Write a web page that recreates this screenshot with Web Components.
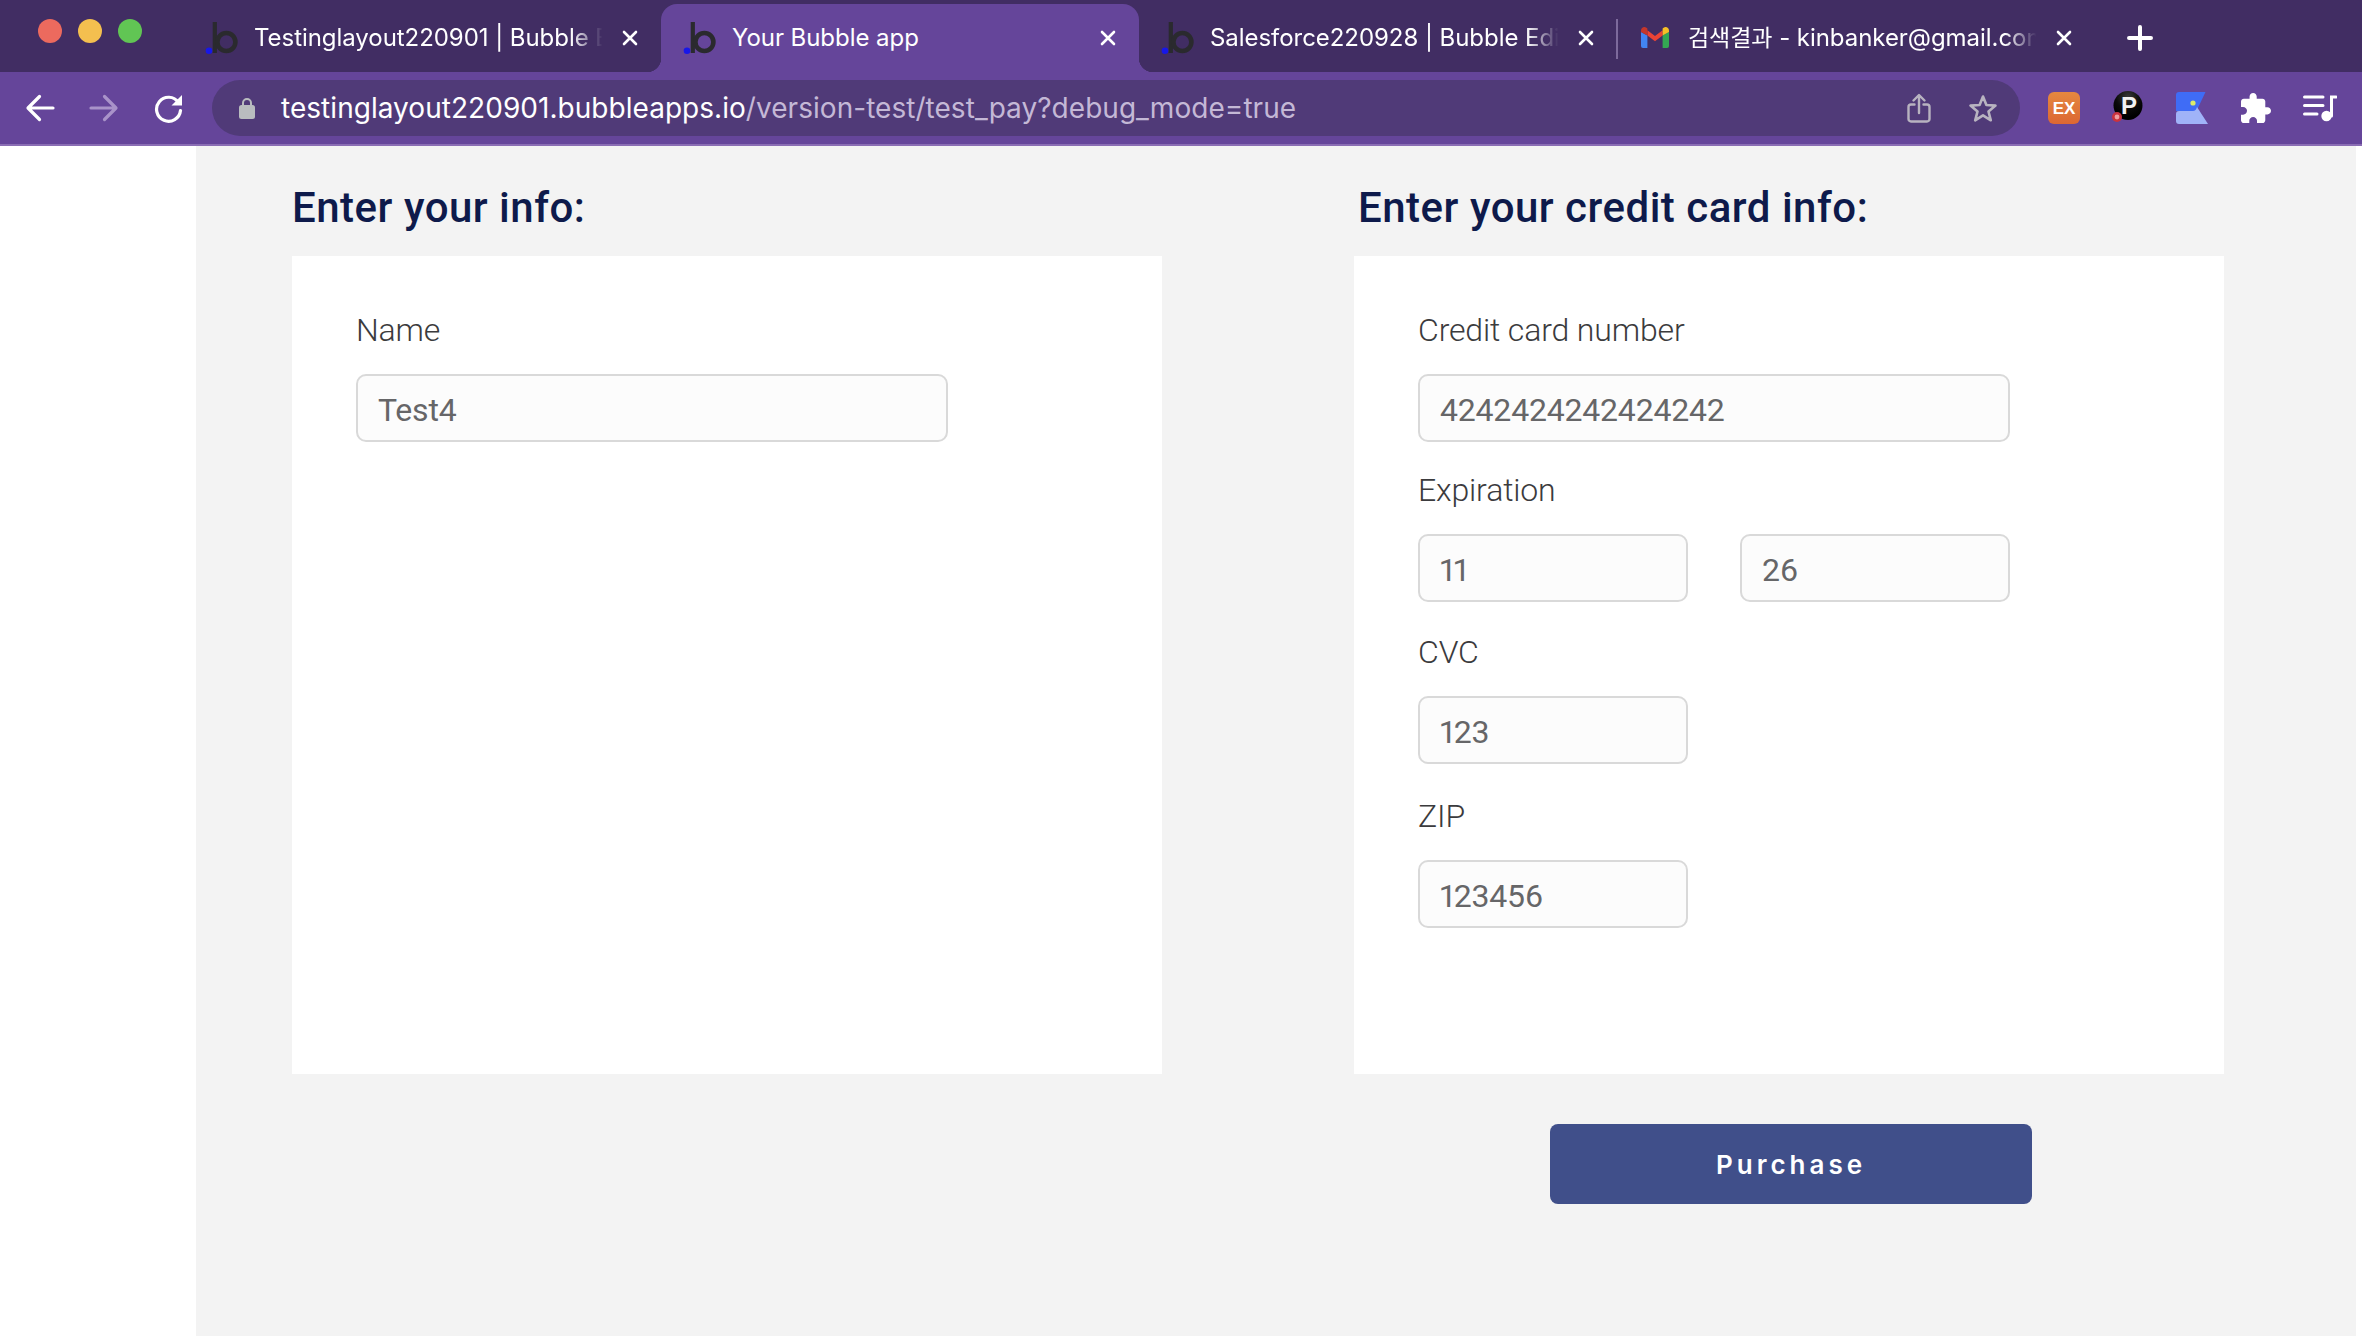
<!DOCTYPE html>
<html>
<head>
<meta charset="utf-8">
<title>Your Bubble app</title>
<style>
html, body { margin: 0; padding: 0; height: 100%; background: #fff; overflow: hidden; }
</style>
</head>
<body>
<browser-chrome>
    <browser-tab icon="bubble" fade>Testinglayout220901 | Bubble Editor</browser-tab>
    <browser-tab icon="bubble" active>Your Bubble app</browser-tab>
    <browser-tab icon="bubble" fade>Salesforce220928 | Bubble Editor</browser-tab>
    <browser-tab icon="gmail" fade divider><span style="font-size:23px">검색결과</span> - kinbanker@gmail.com</browser-tab>
</browser-chrome>
<pay-page>
    <pay-section heading="Enter your info:">
        <pay-field label="Name"><text-box>Test4</text-box></pay-field>
    </pay-section>
    <pay-section heading="Enter your credit card info:" nudge>
        <pay-field label="Credit card number"><text-box>4242424242424242</text-box></pay-field>
        <pay-field label="Expiration" style="margin-top:24px">
            <text-box short>11</text-box>
            <text-box short>26</text-box>
        </pay-field>
        <pay-field label="CVC" style="margin-top:26px"><text-box short>123</text-box></pay-field>
        <pay-field label="ZIP" style="margin-top:28px"><text-box short>123456</text-box></pay-field>
    </pay-section>
    <purchase-button slot="action">Purchase</purchase-button>
</pay-page>

<script>
const bubbleIcon = `
    <svg width="36" height="36" viewBox="0 0 36 36">
        <rect x="8.7" y="2" width="4.2" height="31" fill="#2a2a2e"/>
        <circle cx="22.4" cy="22" r="9" fill="none" stroke="#2a2a2e" stroke-width="4.6"/>
        <circle cx="5" cy="30.8" r="3.3" fill="#1717e8"/>
    </svg>`;

const gmailIcon = `
    <svg width="36" height="36" viewBox="0 0 36 36">
        <g transform="translate(3 7)">
            <path d="M0 5 V19 a2 2 0 0 0 2 2 H6.4 V8.5 Z" fill="#4285f4"/>
            <path d="M28 5 V19 a2 2 0 0 1 -2 2 H21.6 V8.5 Z" fill="#34a853"/>
            <path d="M6.4 8.5 V3.2 L14 9 L21.6 3.2 V8.5 L14 14.2 Z" fill="#ea4335"/>
            <path d="M0 5 V3.5 C0 .6 3.2 -1 5.4 .7 L6.4 1.5 V8.5 Z" fill="#c5362b"/>
            <path d="M28 5 V3.5 C28 .6 24.8 -1 22.6 .7 L21.6 1.5 V8.5 Z" fill="#f6bf26"/>
        </g>
    </svg>`;

class BrowserTab extends HTMLElement {
    constructor() {
        super();
        this.shadowDOM = this.attachShadow({ mode: "open" });
    }

    connectedCallback() {
        const icon = this.getAttribute("icon") === "gmail" ? gmailIcon : bubbleIcon;
        this.shadowDOM.innerHTML = `
            <style>
                :host {
                    display: flex;
                    align-items: center;
                    position: relative;
                    box-sizing: border-box;
                    flex: 0 0 478px;
                    height: 68px;
                    padding-left: 21px;
                    color: #fff;
                    font: 24px/1 Inter, "Noto Sans CJK KR", sans-serif;
                    letter-spacing: -0.05px;
                }
                :host([active]) {
                    background: #65459a;
                    border-radius: 16px 16px 0 0;
                }
                :host([active])::before, :host([active])::after {
                    content: "";
                    position: absolute;
                    bottom: 0;
                    width: 14px;
                    height: 14px;
                }
                :host([active])::before {
                    left: -14px;
                    background: radial-gradient(circle at 0 0, transparent 14px, #65459a 14.5px);
                }
                :host([active])::after {
                    right: -14px;
                    background: radial-gradient(circle at 100% 0, transparent 14px, #65459a 14.5px);
                }
                :host([divider])::before {
                    content: "";
                    position: absolute;
                    left: -1px;
                    top: 15px;
                    width: 2px;
                    height: 40px;
                    background: #7d6a9c;
                }
                svg { flex: none; display: block; }
                .title {
                    flex: none;
                    width: 352px;
                    margin-left: 14px;
                    white-space: nowrap;
                    overflow: hidden;
                    line-height: 30px;
                }
                :host([fade]) .title {
                    -webkit-mask-image: linear-gradient(to right, #000 90%, transparent 99%);
                    mask-image: linear-gradient(to right, #000 90%, transparent 99%);
                }
                .close { flex: none; margin-left: 16px; }
            </style>
            ${icon}
            <div class="title"><slot></slot></div>
            <svg class="close" width="16" height="16" viewBox="0 0 16 16">
                <path d="M2 2 L14 14 M14 2 L2 14" stroke="#fff" stroke-width="2.6" stroke-linecap="round"/>
            </svg>`;
    }
}
customElements.define("browser-tab", BrowserTab);

class BrowserChrome extends HTMLElement {
    constructor() {
        super();
        this.shadowDOM = this.attachShadow({ mode: "open" });
    }

    connectedCallback() {
        this.shadowDOM.innerHTML = `
            <style>
                :host { display: block; }
                .tabbar {
                    display: flex;
                    align-items: flex-end;
                    height: 72px;
                    background: #412d63;
                }
                .lights {
                    flex: 0 0 183px;
                    display: flex;
                    gap: 16px;
                    box-sizing: border-box;
                    padding-left: 38px;
                    align-self: flex-start;
                    margin-top: 19px;
                }
                .lights i { width: 24px; height: 24px; border-radius: 50%; }
                .plus { margin: 4px 0 0 32px; align-self: center; display: block; }
                .toolbar {
                    display: flex;
                    align-items: center;
                    height: 74px;
                    box-sizing: border-box;
                    background: #65459a;
                    border-bottom: 2px solid #8a6db4;
                    padding: 0 0 0 25px;
                }
                .nav { display: block; flex: none; }
                .pill {
                    display: flex;
                    align-items: center;
                    box-sizing: border-box;
                    width: 1808px;
                    height: 56px;
                    margin-left: 26px;
                    padding: 0 21px 0 27px;
                    border-radius: 28px;
                    background: #503a78;
                }
                .url {
                    flex: 1;
                    margin-left: 26px;
                    color: #c4b8d6;
                    font: 28px/34px Inter, sans-serif;
                    letter-spacing: 0.04px;
                    white-space: nowrap;
                }
                .url b { font-weight: 400; color: #fff; }
                .exts { display: flex; align-items: center; margin-left: 28px; }
                .exts svg { display: block; flex: none; }
            </style>
            <div class="tabbar">
                <div class="lights">
                    <i style="background:#ec6a5e"></i>
                    <i style="background:#f4bf4f"></i>
                    <i style="background:#61c554"></i>
                </div>
                <slot></slot>
                <svg class="plus" width="26" height="26" viewBox="0 0 26 26">
                    <path d="M13 2 V24 M2 13 H24" stroke="#fff" stroke-width="4" stroke-linecap="round"/>
                </svg>
            </div>
            <div class="toolbar">
                <svg class="nav" width="30" height="30" viewBox="0 0 30 30">
                    <path d="M28 15 H4 M14.5 3.5 L3 15 L14.5 26.5" fill="none" stroke="#fff" stroke-width="3.2" stroke-linecap="round" stroke-linejoin="round"/>
                </svg>
                <svg class="nav" style="margin-left:34px" width="30" height="30" viewBox="0 0 30 30">
                    <path d="M2 15 H26 M15.5 3.5 L27 15 L15.5 26.5" fill="none" stroke="#a993c9" stroke-width="3.2" stroke-linecap="round" stroke-linejoin="round"/>
                </svg>
                <svg class="nav" style="margin-left:34px" width="32" height="32" viewBox="0 0 32 32">
                    <path d="M25.5 10.5 A12 12 0 1 0 27.5 18.5" fill="none" stroke="#fff" stroke-width="3.2" stroke-linecap="round"/>
                    <path d="M29 3 V13.5 H18.5 Z" fill="#fff"/>
                </svg>
                <div class="pill" style="margin-left:27px">
                    <svg class="nav" width="16" height="22" viewBox="0 0 16 22">
                        <path d="M4 9 V6 a4 4 0 0 1 8 0 V9" fill="none" stroke="#b9bcbf" stroke-width="2"/>
                        <rect x="0" y="8" width="16" height="14" rx="2.5" fill="#b9bcbf"/>
                    </svg>
                    <div class="url"><b>testinglayout220901.bubbleapps.io</b>/version-test/test_pay?debug_mode=true</div>
                    <svg class="nav" width="24" height="30" viewBox="0 0 24 30">
                        <path d="M7.5 11.5 H4 a2.5 2.5 0 0 0 -2.5 2.5 V26 a2.5 2.5 0 0 0 2.5 2.5 H20 a2.5 2.5 0 0 0 2.5 -2.5 V14 a2.5 2.5 0 0 0 -2.5 -2.5 H16.5 M12 20 V2.5 M6.5 7.5 L12 2 L17.5 7.5" fill="none" stroke="#b8b3c0" stroke-width="2.4" stroke-linecap="round" stroke-linejoin="round"/>
                    </svg>
                    <svg class="nav" style="margin-left:36px" width="32" height="30" viewBox="0 0 32 30">
                        <path d="M16 3.5 L19.4 12 L28.5 12.6 L21.5 18.5 L23.8 27.3 L16 22.4 L8.2 27.3 L10.5 18.5 L3.5 12.6 L12.6 12 Z" fill="none" stroke="#b8b3c0" stroke-width="2.6" stroke-linejoin="round"/>
                    </svg>
                </div>
                <div class="exts">
                    <svg width="32" height="32" viewBox="0 0 32 32">
                        <defs><linearGradient id="ex" x1="0" y1="0" x2="0" y2="1"><stop offset="0" stop-color="#e5883f"/><stop offset="1" stop-color="#dc6733"/></linearGradient></defs>
                        <rect width="32" height="32" rx="6" fill="url(#ex)"/>
                        <text x="16" y="22" text-anchor="middle" fill="#fff" font-family="Liberation Sans, sans-serif" font-weight="700" font-size="17">EX</text>
                    </svg>
                    <svg style="margin-left:28px" width="36" height="36" viewBox="0 0 36 36">
                        <defs><radialGradient id="ball" cx="0.5" cy="0.2" r="0.7"><stop offset="0" stop-color="#3a3a3a"/><stop offset="0.6" stop-color="#0a0a0a"/><stop offset="1" stop-color="#000"/></radialGradient></defs>
                        <circle cx="20" cy="15.5" r="14.5" fill="url(#ball)"/>
                        <text x="21" y="24" text-anchor="middle" fill="#f2f2f2" font-family="Liberation Sans, sans-serif" font-weight="700" font-size="24">P</text>
                        <circle cx="9" cy="27" r="5" fill="#c9333f"/>
                        <circle cx="9" cy="27" r="2.4" fill="#ef9da0"/>
                    </svg>
                    <svg style="margin-left:32px" width="32" height="32" viewBox="0 0 32 32">
                        <path d="M3 0 H29.5 L20.5 19 H0 V3 a3 3 0 0 1 3 -3 Z" fill="#3f6cf6"/>
                        <path d="M0 22 a3 3 0 0 1 3 -3 H17 q3 0 4 -4 L32 32 H3 a3 3 0 0 1 -3 -3 Z" fill="#a0b3f8"/>
                        <circle cx="17" cy="11" r="2.6" fill="#dcec6a"/>
                    </svg>
                    <svg style="margin-left:33px" width="30" height="30" viewBox="2 1 21 21">
                        <path d="M20.5 11H19V7c0-1.1-.9-2-2-2h-4V3.5C13 2.12 11.88 1 10.5 1S8 2.12 8 3.5V5H4c-1.1 0-1.99.9-1.99 2v3.8H3.5c1.49 0 2.7 1.21 2.7 2.7s-1.21 2.7-2.7 2.7H2V20c0 1.1.9 2 2 2h3.8v-1.5c0-1.49 1.21-2.7 2.7-2.7 1.49 0 2.7 1.21 2.7 2.7V22H17c1.1 0 2-.9 2-2v-4h1.5c1.38 0 2.5-1.12 2.5-2.5S21.88 11 20.5 11z" fill="#fff"/>
                    </svg>
                    <svg style="margin-left:32px" width="34" height="30" viewBox="0 0 34 30">
                        <path d="M1.5 4 H20 M1.5 12.5 H20 M1.5 21 H14" stroke="#fff" stroke-width="3" stroke-linecap="round"/>
                        <path d="M28.5 23 V4 H33" fill="none" stroke="#fff" stroke-width="3" stroke-linecap="round"/>
                        <circle cx="23.5" cy="23" r="5.2" fill="#fff"/>
                    </svg>
                </div>
            </div>`;
    }
}
customElements.define("browser-chrome", BrowserChrome);

class TextBox extends HTMLElement {
    constructor() {
        super();
        this.shadowDOM = this.attachShadow({ mode: "open" });
        this.shadowDOM.innerHTML = `
            <style>
                :host {
                    display: block;
                    box-sizing: border-box;
                    width: 592px;
                    height: 68px;
                    padding: 0 20px;
                    border: 2px solid #d9d9d9;
                    border-radius: 10px;
                    background: #fcfcfc;
                    color: #666668;
                    font: 32px/68px Roboto, sans-serif;
                    font-variant-numeric: proportional-nums;
                    letter-spacing: -0.2px;
                    white-space: nowrap;
                }
                :host([short]) { width: 270px; }
            </style>
            <slot></slot>`;
    }
}
customElements.define("text-box", TextBox);

class PayField extends HTMLElement {
    constructor() {
        super();
        this.shadowDOM = this.attachShadow({ mode: "open" });
    }

    connectedCallback() {
        this.shadowDOM.innerHTML = `
            <style>
                :host { display: block; }
                label {
                    display: block;
                    box-sizing: border-box;
                    height: 68px;
                    padding-top: 4px;
                    color: #3b3b3d;
                    font: 300 32px/40px Roboto, sans-serif;
                    letter-spacing: -0.15px;
                }
                .boxes { display: flex; gap: 52px; }
            </style>
            <label>${this.getAttribute("label")}</label>
            <div class="boxes"><slot></slot></div>`;
    }
}
customElements.define("pay-field", PayField);

class PaySection extends HTMLElement {
    constructor() {
        super();
        this.shadowDOM = this.attachShadow({ mode: "open" });
    }

    connectedCallback() {
        this.shadowDOM.innerHTML = `
            <style>
                :host { display: block; width: 870px; }
                h2 {
                    margin: 0;
                    height: 110px;
                    box-sizing: border-box;
                    padding-top: 37px;
                    color: #0e1a4b;
                    font: 500 42px/50px Roboto, sans-serif;
                    letter-spacing: 0.5px;
                }
                :host([nudge]) h2 { padding-left: 4px; }
                .card {
                    box-sizing: border-box;
                    height: 818px;
                    padding: 50px 64px 0;
                    background: #fff;
                }
            </style>
            <h2>${this.getAttribute("heading")}</h2>
            <div class="card"><slot></slot></div>`;
    }
}
customElements.define("pay-section", PaySection);

class PurchaseButton extends HTMLElement {
    constructor() {
        super();
        this.shadowDOM = this.attachShadow({ mode: "open" });
        this.shadowDOM.innerHTML = `
            <style>
                :host {
                    display: block;
                    width: 482px;
                    height: 80px;
                    border-radius: 8px;
                    background: #404f8a;
                    color: #fff;
                    text-align: center;
                    font: 600 26px/82px Inter, sans-serif;
                    letter-spacing: 4px;
                    cursor: pointer;
                }
            </style>
            <slot></slot>`;
    }
}
customElements.define("purchase-button", PurchaseButton);

class PayPage extends HTMLElement {
    constructor() {
        super();
        this.shadowDOM = this.attachShadow({ mode: "open" });
        this.shadowDOM.innerHTML = `
            <style>
                :host {
                    display: block;
                    box-sizing: border-box;
                    height: 1190px;
                    margin: 0 6px 0 196px;
                    padding-left: 96px;
                    background: #f3f3f3;
                }
                .cols { display: flex; gap: 192px; }
                .action { display: flex; padding: 50px 0 0 1258px; }
            </style>
            <div class="cols"><slot></slot></div>
            <div class="action"><slot name="action"></slot></div>`;
    }
}
customElements.define("pay-page", PayPage);
</script>
</body>
</html>
